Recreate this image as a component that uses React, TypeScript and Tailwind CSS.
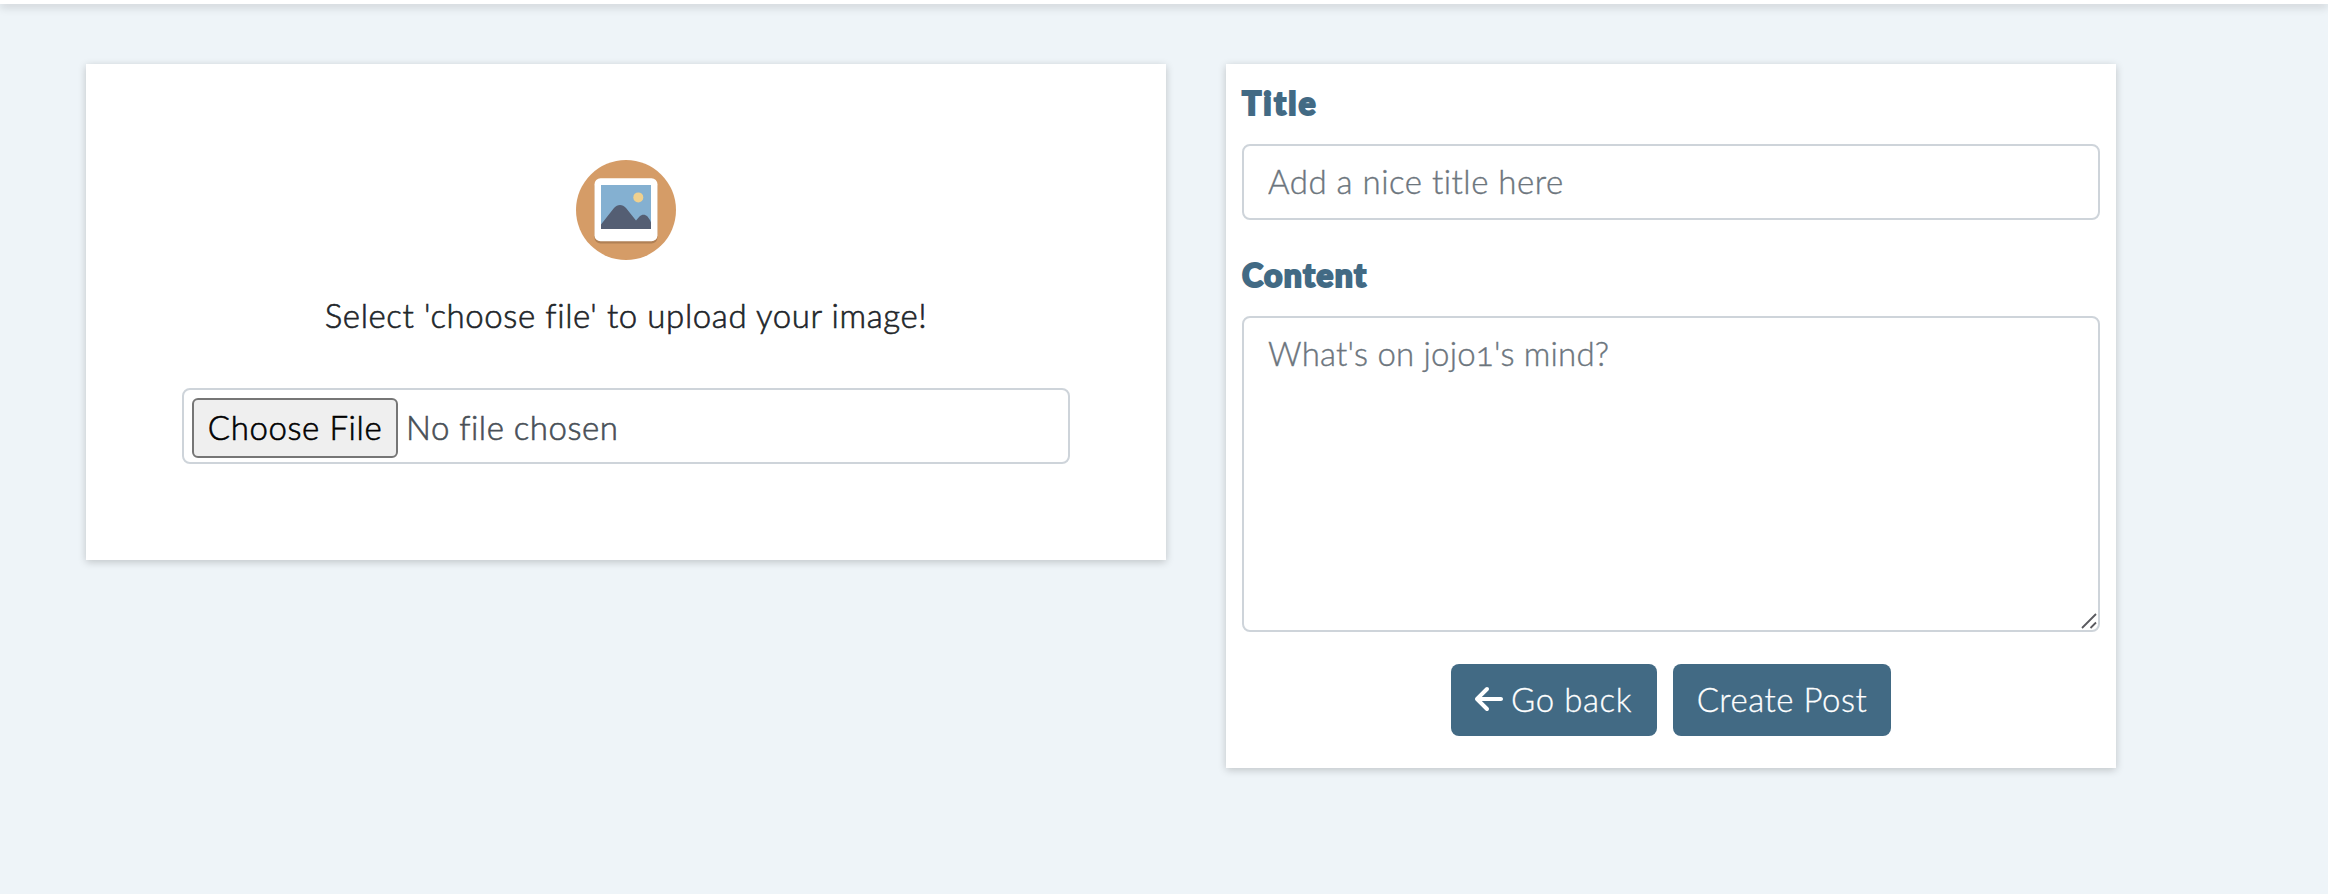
import { FaArrowLeft } from "react-icons/fa6";

function ImageIcon() {
  return (
    <svg viewBox="0 0 100 100" className="size-[100px]" aria-hidden="true">
      <circle cx="50" cy="50" r="50" fill="#d59c67" />
      <rect x="18.5" y="20.5" width="63" height="63" rx="6" fill="#b08055" />
      <rect x="18.5" y="18.2" width="63" height="63" rx="6" fill="#fff" />
      <rect x="25" y="25" width="50" height="44" fill="#84b0d1" />
      <circle cx="62.3" cy="37.4" r="5" fill="#efd08e" />
      <path
        d="M25 69V64.5L38 48C41.5 44 46.500 44 50 48L60 60.500L63.500 56.500C66 54 69 54 71.500 56.500Q74 59.500 75 62.500V69Z"
        fill="#545e73"
      />
    </svg>
  );
}

const field = "block w-full rounded-lg border-2 border-[#ced4da] bg-white text-[33px] leading-[48px]";
const label = "block font-black text-[#426a84] [-webkit-text-stroke:2px_#426a84] [stroke-linejoin:round]";

export default function App() {
  return (
    <div className="h-[894px] overflow-hidden bg-[#eef4f8] font-['Lato',sans-serif] text-[32px] leading-[48px] font-light text-[#212529]">
      <header className="h-1 bg-white shadow-[0_2px_10px_rgba(0,0,0,0.25)]" />
      <main className="flex items-start gap-[60px] pt-[60px] pl-[86px]">
        <section className="flex h-[496px] w-[1080px] flex-col items-center bg-white px-24 pt-24 shadow-[0_2px_8px_rgba(0,0,0,0.2)]">
          <ImageIcon />
          <p className="mt-[31px] text-[33px] whitespace-nowrap tracking-[0.6px] [-webkit-text-stroke:0.6px_currentColor]">
            Select 'choose file' to upload your image!
          </p>
          <div className={`${field} mt-[49px] flex h-[76px] items-start gap-2 px-2 pt-2`}>
            <button className="h-[60px] w-[206px] rounded-md border-2 border-[#767676] bg-[#efefef] pb-0.5 whitespace-nowrap text-black tracking-[0.6px] [-webkit-text-stroke:0.6px_currentColor]">
              Choose File
            </button>
            <span className="pt-[5px] whitespace-nowrap text-[#495057] tracking-[0.5px] [-webkit-text-stroke:0.6px_currentColor]">
              No file chosen
            </span>
          </div>
        </section>

        <section className="h-[704px] w-[890px] bg-white px-4 pt-[15px] shadow-[0_2px_8px_rgba(0,0,0,0.2)]">
          <label htmlFor="title" className={`${label} tracking-[2.2px]`}>Title</label>
          <input
            id="title"
            className={`${field} mt-[17px] h-[76px] px-6 pb-0.5 tracking-[0.5px] placeholder:text-[#6c757d] placeholder:[-webkit-text-stroke:0.4px_#6c757d]`}
            placeholder="Add a nice title here"
          />
          <label htmlFor="content" className={`${label} mt-[31px] tracking-[1.3px]`}>Content</label>
          <div className="relative mt-[17px]">
            <textarea
              id="content"
              className={`${field} h-[316px] resize-none px-6 pt-[11px] tracking-[0.2px] oldstyle-nums placeholder:text-[#6c757d] placeholder:[-webkit-text-stroke:0.4px_#6c757d]`}
              placeholder="What's on jojo1's mind?"
            />
            <svg viewBox="0 0 16 16" className="absolute right-[3px] bottom-[3px] size-4" stroke="#5a5a5f" strokeWidth="1.8" aria-hidden="true">
              <path d="M1 15L15 1M9.500 15L15 9.500" />
            </svg>
          </div>
          <div className="mt-8 flex justify-center gap-4 text-[33px]">
            <button className="flex h-[72px] w-[206px] items-center gap-1.5 rounded-lg bg-[#426a84] pb-0.5 pl-[22px] whitespace-nowrap text-white tracking-[0.6px] [-webkit-text-stroke:0.3px_currentColor]">
              <FaArrowLeft className="size-8 shrink-0" />
              <span>Go back</span>
            </button>
            <button className="h-[72px] w-[218px] rounded-lg bg-[#426a84] pb-0.5 whitespace-nowrap text-white tracking-[0.5px] [-webkit-text-stroke:0.3px_currentColor]">
              Create Post
            </button>
          </div>
        </section>
      </main>
    </div>
  );
}
